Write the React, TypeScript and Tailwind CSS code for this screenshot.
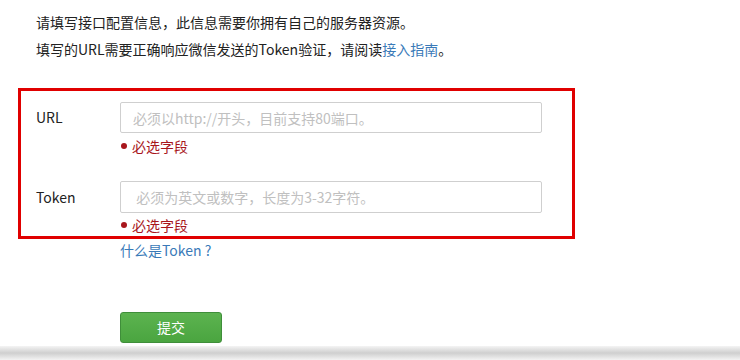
import React from "react";

export default function App() {
  const font = { fontFamily: '"Noto Sans CJK SC", "Noto Sans", sans-serif' };
  return (
    <div className="w-[740px] h-[360px] bg-white flex flex-col overflow-hidden" style={font}>
      <div className="h-[346px] bg-white flex flex-col">
        <div className="pt-[9px] pl-[36px] text-[14px] leading-[27px] text-[#222]">
          <p>请填写接口配置信息，此信息需要你拥有自己的服务器资源。</p>
          <p>
            填写的URL需要正确响应微信发送的Token验证，请阅读
            <a className="text-[#3a7ab8]">接入指南</a>。
          </p>
        </div>
        <div className="ml-[18px] mt-[25px] w-[557px] h-[151px] border-[3px] border-[#e00000] pt-[11px] pl-[15px]">
          <div className="flex items-center">
            <label className="w-[84px] text-[14px] text-[#222]">URL</label>
            <input
              className="w-[422px] h-[31px] border border-[#cfcfcf] rounded-[2px] px-[12px] text-[14px] placeholder-[#c0c0c0] outline-none"
              placeholder="必须以http://开头，目前支持80端口。"
            />
          </div>
          <div className="ml-[84px] mt-[3px] flex items-center gap-[5px] leading-[20px] text-[14px] text-[#a8161c]">
            <span className="w-[6px] h-[6px] rounded-full bg-[#a8161c] ml-[1px]" />
            <span>必选字段</span>
          </div>
          <div className="flex items-center mt-[25px]">
            <label className="w-[84px] text-[14px] text-[#222]">Token</label>
            <input
              className="w-[422px] h-[32px] border border-[#cfcfcf] rounded-[2px] px-[12px] text-[14px] placeholder-[#c0c0c0] outline-none"
              placeholder=" 必须为英文或数字，长度为3-32字符。"
            />
          </div>
          <div className="ml-[84px] mt-[2px] flex items-center gap-[5px] leading-[20px] text-[14px] text-[#a8161c]">
            <span className="w-[6px] h-[6px] rounded-full bg-[#a8161c] ml-[1px]" />
            <span>必选字段</span>
          </div>
        </div>
        <div className="ml-[120px] mt-[1px] leading-[20px] text-[14px] text-[#3a7ab8]">什么是Token ?</div>
        <button className="ml-[120px] mt-[52px] w-[102px] h-[31px] rounded-[3px] border border-[#3f8e3a] bg-gradient-to-b from-[#5cb34f] to-[#4aa540] text-white text-[14px]">
          提交
        </button>
      </div>
      <div className="h-[14px] bg-gradient-to-b from-[#f4f4f4] via-[#cfcfcf] to-[#f3f3f3]" />
    </div>
  );
}
